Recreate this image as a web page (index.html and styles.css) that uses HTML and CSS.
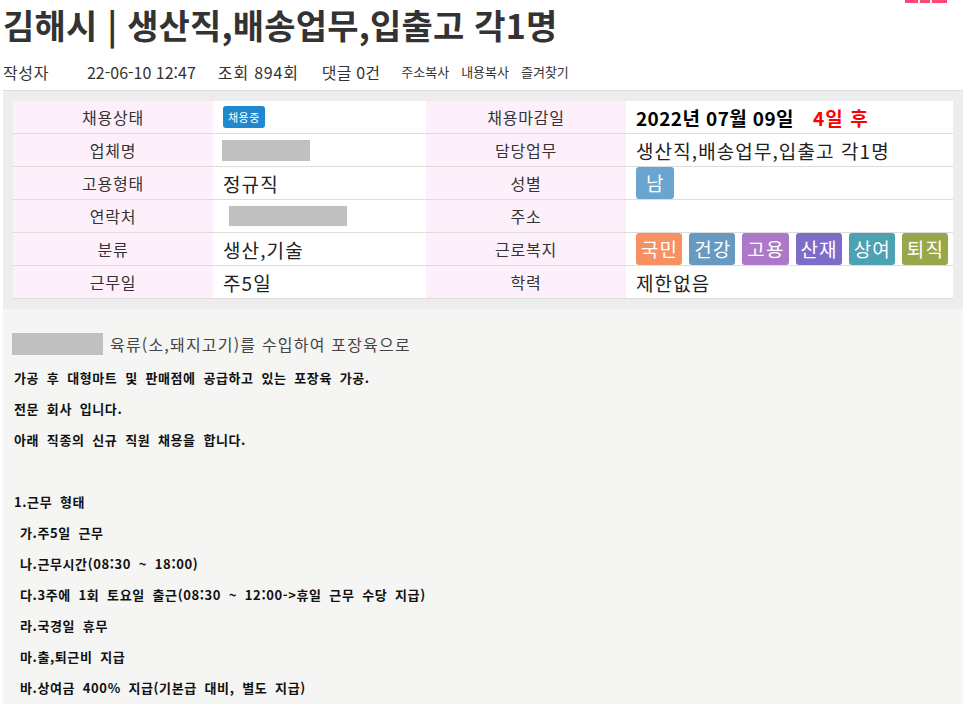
FILE: index.html
```html
<!DOCTYPE html>
<html lang="ko">
<head>
<meta charset="utf-8">
<title>김해시 | 생산직,배송업무,입출고 각1명</title>
<link rel="stylesheet" href="styles.css">
</head>
<body>
<div class="top-deco"><span class="d1"></span><span class="d2"></span><span class="d3"></span></div>
<div class="page">
  <h1 class="title">김해시 | 생산직,배송업무,입출고 각1명</h1>
  <div class="meta">
    <span class="author">작성자</span>
    <span class="date">22-06-10 12:47</span>
    <span class="views">조회 894회</span>
    <span class="comments">댓글 0건</span>
    <span class="tools"><a>주소복사</a><a>내용복사</a><a>즐겨찾기</a></span>
  </div>

  <div class="info-panel">
    <div class="info">
      <div class="lbl">채용상태</div>
      <div class="val"><span class="status">채용중</span></div>
      <div class="lbl">채용마감일</div>
      <div class="val"><b class="deadline">2022년 07월 09일</b><b class="dday">4일 후</b></div>

      <div class="lbl">업체명</div>
      <div class="val"><span class="redact redact-name"></span></div>
      <div class="lbl">담당업무</div>
      <div class="val">생산직,배송업무,입출고 각1명</div>

      <div class="lbl">고용형태</div>
      <div class="val">정규직</div>
      <div class="lbl">성별</div>
      <div class="val"><span class="gender">남</span></div>

      <div class="lbl">연락처</div>
      <div class="val"><span class="redact redact-phone"></span></div>
      <div class="lbl">주소</div>
      <div class="val"></div>

      <div class="lbl">분류</div>
      <div class="val">생산,기술</div>
      <div class="lbl">근로복지</div>
      <div class="val welfare">
        <span class="wf wf-1">국민</span>
        <span class="wf wf-2">건강</span>
        <span class="wf wf-3">고용</span>
        <span class="wf wf-4">산재</span>
        <span class="wf wf-5">상여</span>
        <span class="wf wf-6">퇴직</span>
      </div>

      <div class="lbl">근무일</div>
      <div class="val">주5일</div>
      <div class="lbl">학력</div>
      <div class="val">제한없음</div>
    </div>
  </div>

  <div class="content">
    <p class="intro"><span class="redact redact-intro"></span>육류(소,돼지고기)를 수입하여 포장육으로</p>
    <div class="body">
      <p>가공 후 대형마트 및 판매점에 공급하고 있는 포장육 가공.</p>
      <p>전문 회사 입니다.</p>
      <p>아래 직종의 신규 직원 채용을 합니다.</p>
      <p>&nbsp;</p>
      <p>1.근무 형태</p>
      <p class="ind">가.주5일 근무</p>
      <p class="ind">나.근무시간(08:30 ~ 18:00)</p>
      <p class="ind">다.3주에 1회 토요일 출근(08:30 ~ 12:00-&gt;휴일 근무 수당 지급)</p>
      <p class="ind">라.국경일 휴무</p>
      <p class="ind">마.출,퇴근비 지급</p>
      <p class="ind">바.상여금 400% 지급(기본급 대비, 별도 지급)</p>
    </div>
  </div>
</div>
</body>
</html>
```
FILE: styles.css
```css
html, body {
  margin: 0;
  padding: 0;
  background: #fff;
}
body {
  font-family: "Noto Sans CJK KR", "Noto Sans", sans-serif;
  color: #333;
  overflow: hidden;
}
.top-deco {
  position: absolute;
  top: 0;
  left: 905px;
  display: flex;
  gap: 2px;
  height: 3px;
}
.top-deco span {
  display: block;
  height: 3px;
  background: #ff4775;
}
.top-deco .d1 { width: 13px; }
.top-deco .d2 { width: 10px; }
.top-deco .d3 { width: 15px; }

.page {
  padding: 0 3px;
}
.title {
  margin: 0;
  padding-top: 1px;
  font-size: 34px;
  font-weight: 700;
  line-height: 48px;
  color: #333;
  letter-spacing: 0.2px;
}
.meta {
  margin-top: 11px;
  display: flex;
  align-items: center;
  height: 24px;
  font-size: 16px;
  line-height: 24px;
  color: #333;
}
.meta .author { margin-right: 38px; letter-spacing: 0.6px; }
.meta .date { margin-right: 22px; }
.meta .views { margin-right: 23px; letter-spacing: 0.8px; }
.meta .comments { margin-right: 21px; letter-spacing: 0.2px; }
.meta .tools {
  display: flex;
  gap: 12px;
  font-size: 13px;
}
.meta .tools a { color: #333; cursor: pointer; }

.info-panel {
  margin-top: 6px;
  background: #ededed;
  border-top: 1px solid #dcdcdc;
  padding: 10px;
}
.info {
  display: grid;
  grid-template-columns: 200px 213px 200px 327px;
  background: #fff;
}
.lbl, .val {
  height: 32px;
  border-bottom: 1px solid #dddddd;
  display: flex;
  align-items: center;
  min-width: 0;
}
.lbl {
  background: #fdf0fa;
  justify-content: center;
  font-size: 16px;
  letter-spacing: 0.8px;
  color: #333;
}
.val {
  padding: 0 10px;
  font-size: 19px;
  letter-spacing: 1.1px;
  color: #222;
  white-space: nowrap;
}
.status {
  display: inline-block;
  background: #1f88cf;
  color: #fff;
  font-size: 11px;
  letter-spacing: 0.5px;
  line-height: 22px;
  height: 22px;
  padding: 0 5px;
  border-radius: 3px;
}
.deadline {
  color: #000;
  font-weight: 700;
  letter-spacing: 0.4px;
}
.dday {
  color: #ff0000;
  font-weight: 700;
  margin-left: 19px;
}
.redact {
  display: inline-block;
  background: #c0c0c0;
}
.redact-name { width: 88px; height: 21px; margin-left: -1px; }
.redact-phone { width: 118px; height: 20px; margin-left: 6px; }
.redact-intro { width: 91px; height: 22px; margin-right: 7px; }

.gender {
  display: inline-block;
  background: #6aa5cf;
  color: #fff;
  height: 32px;
  line-height: 32px;
  padding: 0 9px 0 10px;
  border-radius: 3px;
}
.welfare {
  gap: 7px;
  padding-right: 0;
}
.wf {
  display: inline-block;
  flex-shrink: 0;
  color: #fff;
  height: 32px;
  line-height: 32px;
  padding: 0 4px 0 5px;
  border-radius: 3px;
}
.wf-1 { background: #f79162; }
.wf-2 { background: #6899c0; }
.wf-3 { background: #ae78c8; }
.wf-4 { background: #7d6cc8; }
.wf-5 { background: #4ca1b3; }
.wf-6 { background: #9aa64a; }

.content {
  background: #f5f5f3;
  padding: 24px 9px 40px 9px;
  min-height: 400px;
}
.intro {
  margin: 0;
  height: 22px;
  line-height: 22px;
  font-size: 16px;
  letter-spacing: 1.2px;
  color: #444;
  display: flex;
  align-items: center;
}
.body {
  margin-top: 7px;
  padding-left: 2px;
}
.body p {
  margin: 0;
  height: 31px;
  line-height: 31px;
  font-size: 13px;
  font-weight: 700;
  color: #111;
  letter-spacing: 0.6px;
  word-spacing: 3.5px;
  white-space: pre;
}
.body p.ind {
  padding-left: 6px;
}
```
